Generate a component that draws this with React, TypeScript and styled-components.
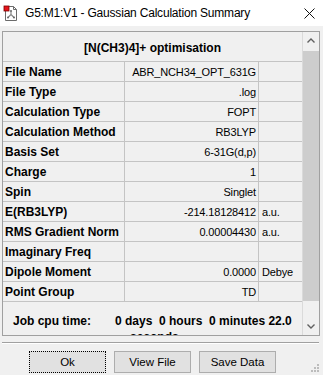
import React from 'react'
import styled, { createGlobalStyle } from 'styled-components'

const GlobalStyle = createGlobalStyle`
  html, body {
    margin: 0;
    padding: 0;
    background: #f0f0f0;
  }
  body {
    font-family: "Liberation Sans", Arial, sans-serif;
    color: #000;
  }
`

const Window = styled.div`
  width: 323px;
  height: 375px;
  display: flex;
  flex-direction: column;
  background: #f0f0f0;
  overflow: hidden;
`

const TitleBar = styled.div`
  height: 26px;
  flex-shrink: 0;
  display: flex;
  align-items: center;
  padding: 0 8px 0 3px;
  background: #fff;
`

const TitleText = styled.span`
  flex: 1;
  margin-left: 6px;
  font-size: 12px;
  letter-spacing: -0.2px;
  white-space: nowrap;
`

const Body = styled.div`
  flex: 1;
  display: flex;
  flex-direction: column;
  padding: 5px 3px 0 2px;
`

const Frame = styled.div`
  height: 305px;
  box-sizing: border-box;
  border: 1px solid #a0a0a0;
  display: flex;
  overflow: hidden;
`

const Viewport = styled.div`
  width: 299px;
  overflow: hidden;
`

const Heading = styled.div`
  height: 30px;
  box-sizing: border-box;
  padding-top: 3px;
  border-bottom: 1px solid #c4c4c4;
  display: flex;
  align-items: center;
  justify-content: center;
  font-size: 12px;
  font-weight: bold;
  white-space: nowrap;
`

const Row = styled.div`
  height: 20px;
  box-sizing: border-box;
  display: grid;
  grid-template-columns: 122px 134px 43px;
  border-bottom: 1px solid #c4c4c4;
`

const Cell = styled.div<{ align?: 'left' | 'right' }>`
  display: flex;
  align-items: center;
  box-sizing: border-box;
  overflow: hidden;
  white-space: nowrap;
  justify-content: ${({ align }) => (align === 'right' ? 'flex-end' : 'flex-start')};
`

const Label = styled(Cell)`
  padding-left: 2px;
  border-right: 1px solid #c4c4c4;
  font-size: 12px;
  font-weight: bold;
`

const Value = styled(Cell)`
  padding-right: 2px;
  border-right: 1px solid #c4c4c4;
  font-size: 11px;
  letter-spacing: -0.15px;
`

const Unit = styled(Cell)`
  padding-left: 3px;
  font-size: 11px;
  letter-spacing: -0.15px;
`

const CpuRow = styled.div`
  display: flex;
  padding: 11px 0 0 10px;
  font-size: 12px;
  font-weight: bold;
  line-height: 16px;
`

const CpuLabel = styled.div`
  width: 102px;
  flex-shrink: 0;
`

const CpuValue = styled.div`
  white-space: pre;
`

const CpuWrap = styled.div`
  padding-left: 15px;
`

const Scrollbar = styled.div`
  width: 17px;
  box-sizing: border-box;
  border-left: 1px solid #dadada;
  display: flex;
  flex-direction: column;
  background: #f0f0f0;
`

const ArrowBox = styled.div`
  height: 17px;
  flex-shrink: 0;
  display: flex;
  align-items: center;
  justify-content: center;
`

const Thumb = styled.div`
  height: 250px;
  margin-top: 2px;
  background: #cdcdcd;
`

const Track = styled.div`
  flex: 1;
`

const Separator = styled.div`
  margin: 6px 1px 0 0;
  border-top: 1px solid #a0a0a0;
  border-bottom: 1px solid #fff;
`

const ButtonRow = styled.div`
  display: flex;
  gap: 8px;
  height: 22px;
  margin-top: 7px;
  padding-left: 27px;
`

const Button = styled.button<{ focused?: boolean }>`
  width: 77px;
  height: 22px;
  box-sizing: border-box;
  padding: 0;
  background: #e1e1e1;
  border: 1px ${({ focused }) => (focused ? 'dotted #000' : 'solid #adadad')};
  font-family: "Liberation Sans", Arial, sans-serif;
  font-size: 11.5px;
  color: #000;
`

const Grip = styled.svg`
  margin-left: auto;
  margin-right: 1px;
  align-self: flex-end;
`

const rows: [string, string, string][] = [
  ['File Name', 'ABR_NCH34_OPT_631G', ''],
  ['File Type', '.log', ''],
  ['Calculation Type', 'FOPT', ''],
  ['Calculation Method', 'RB3LYP', ''],
  ['Basis Set', '6-31G(d,p)', ''],
  ['Charge', '1', ''],
  ['Spin', 'Singlet', ''],
  ['E(RB3LYP)', '-214.18128412', 'a.u.'],
  ['RMS Gradient Norm', '0.00004430', 'a.u.'],
  ['Imaginary Freq', '', ''],
  ['Dipole Moment', '0.0000', 'Debye'],
  ['Point Group', 'TD', ''],
]

function AppIcon() {
  return (
    <svg width="16" height="16" viewBox="0 0 16 16">
      <path d="M2.5 1.5h8l3 3v11h-11z" fill="#fff" stroke="#6b6b6b" />
      <path d="M10.5 1.5v3h3" fill="none" stroke="#6b6b6b" />
      <path d="M8 6.5v3M8 9.5l-3 3M8 9.5l3 3" stroke="#8a8a8a" strokeWidth="1.2" />
      <circle cx="8" cy="6" r="1" fill="#666" />
      <circle cx="5" cy="12.5" r="1" fill="#666" />
      <circle cx="11" cy="12.5" r="1" fill="#666" />
      <rect x="1" y="1" width="5" height="5" fill="#e5141b" stroke="#7a0000" strokeWidth="0.8" />
    </svg>
  )
}

export default function App() {
  return (
    <Window>
      <GlobalStyle />
      <TitleBar>
        <AppIcon />
        <TitleText>G5:M1:V1 - Gaussian Calculation Summary</TitleText>
        <svg width="11" height="11" viewBox="0 0 11 11">
          <path d="M0.5 0.5l10 10M10.5 0.5l-10 10" stroke="#111" strokeWidth="1" />
        </svg>
      </TitleBar>
      <Body>
        <Frame>
          <Viewport>
            <Heading>[N(CH3)4]+ optimisation</Heading>
            {rows.map(([label, value, unit]) => (
              <Row key={label}>
                <Label>{label}</Label>
                <Value align="right">{value}</Value>
                <Unit>{unit}</Unit>
              </Row>
            ))}
            <CpuRow>
              <CpuLabel>Job cpu time:</CpuLabel>
              <CpuValue>
                {'0 days  0 hours  0 minutes 22.0'}
                <CpuWrap>seconds</CpuWrap>
              </CpuValue>
            </CpuRow>
          </Viewport>
          <Scrollbar>
            <ArrowBox>
              <svg width="8" height="5" viewBox="0 0 8 5">
                <path d="M0.5 4.5l3.5-3.5 3.5 3.5" fill="none" stroke="#606060" strokeWidth="1.4" />
              </svg>
            </ArrowBox>
            <Thumb />
            <Track />
            <ArrowBox>
              <svg width="8" height="5" viewBox="0 0 8 5">
                <path d="M0.5 0.5l3.5 3.5 3.5-3.5" fill="none" stroke="#606060" strokeWidth="1.4" />
              </svg>
            </ArrowBox>
          </Scrollbar>
        </Frame>
        <Separator />
        <ButtonRow>
          <Button focused>Ok</Button>
          <Button>View File</Button>
          <Button>Save Data</Button>
          <Grip width="9" height="10" viewBox="0 0 9 10">
            <rect x="7" y="1" width="2" height="2" fill="#bcbcbc" />
            <rect x="4" y="4" width="2" height="2" fill="#bcbcbc" />
            <rect x="7" y="4" width="2" height="2" fill="#bcbcbc" />
            <rect x="1" y="7" width="2" height="2" fill="#bcbcbc" />
            <rect x="4" y="7" width="2" height="2" fill="#bcbcbc" />
            <rect x="7" y="7" width="2" height="2" fill="#bcbcbc" />
          </Grip>
        </ButtonRow>
      </Body>
    </Window>
  )
}
